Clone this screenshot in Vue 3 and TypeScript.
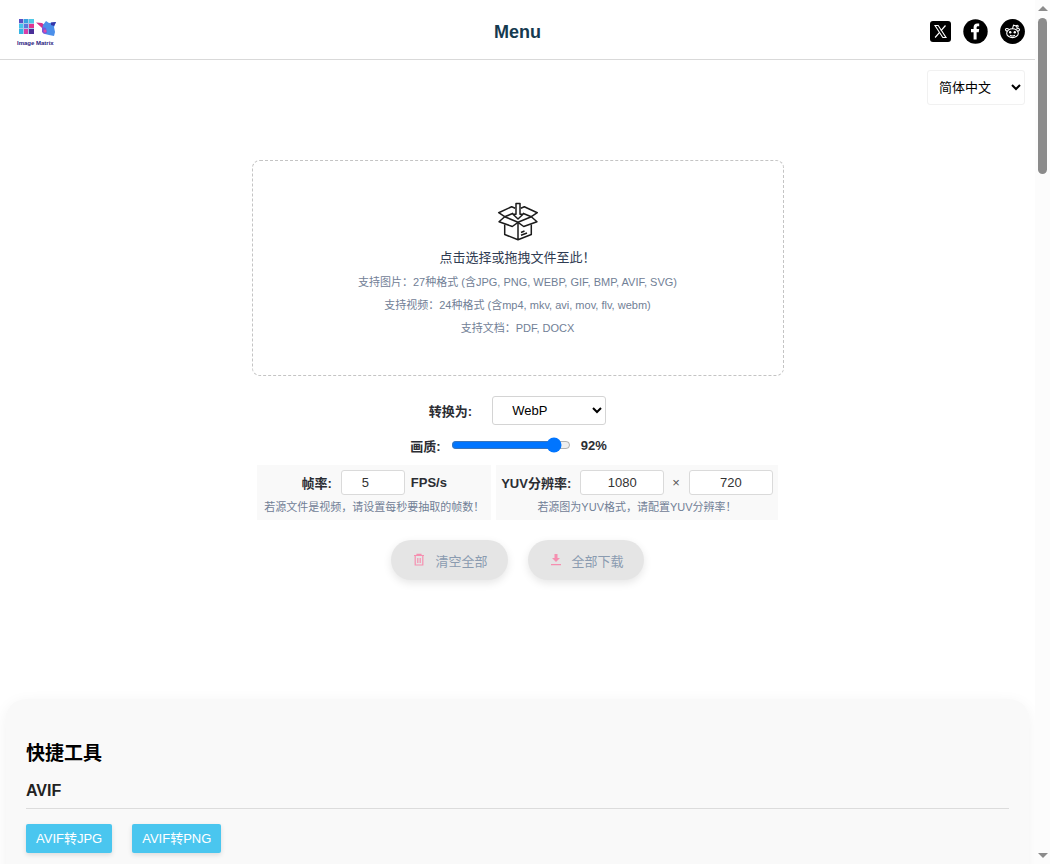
<script setup lang="ts">
import { ref } from 'vue'

const language = ref('zh')
const format = ref('webp')
const quality = ref(92)
const fps = ref(5)
const yuvWidth = ref('1080')
const yuvHeight = ref('720')

const hints: string[] = [
  '支持图片：27种格式 (含JPG, PNG, WEBP, GIF, BMP, AVIF, SVG)',
  '支持视频：24种格式 (含mp4, mkv, avi, mov, flv, webm)',
  '支持文档：PDF, DOCX',
]
const tools: string[] = ['AVIF转JPG', 'AVIF转PNG']
</script>

<template>
  <div class="shell">
    <div class="page">
      <header class="header">
        <a class="logo" href="#" aria-label="Image Matrix">
          <svg width="40" height="20" viewBox="0 0 40 20" aria-hidden="true">
            <rect x="2" y="1" width="15" height="15" fill="#a9c8ee" />
            <rect x="2" y="1" width="4" height="4" fill="#5b4fc4" />
            <rect x="7" y="1" width="4" height="4" fill="#3aa3e0" />
            <rect x="12" y="1" width="5" height="4" fill="#4fc8e6" />
            <rect x="2" y="6" width="4" height="4" fill="#44c4ea" />
            <rect x="7" y="6" width="4" height="4" fill="#5a78dc" />
            <rect x="12" y="6" width="5" height="4" fill="#e0358f" />
            <rect x="2" y="11" width="4" height="5" fill="#35b5e4" />
            <rect x="7" y="11" width="4" height="5" fill="#d83fa6" />
            <rect x="12" y="11" width="5" height="5" fill="#4a2f98" />
            <path d="M19 4.500l6 .5 4 3-2 4-3-3z" fill="#d6318c" />
            <path d="M26 7l3-4 3 2 7-1-2 5 1 5-1 4-5-1-4-1-3-4z" fill="#4b8fea" />
            <path d="M25 9l4 1 1 5-3 1-2-2z" fill="#7a55d8" />
            <path d="M34 4.500l5-.5-2 4-3-1z" fill="#3534a8" />
            <circle cx="28" cy="13" r="1.5" fill="#e04aa5" />
          </svg>
          <span class="logo-text">Image Matrix</span>
        </a>
        <a class="menu" href="#">Menu</a>
        <nav class="social">
          <a href="#" aria-label="X">
            <svg width="21" height="21" viewBox="0 0 21 21">
              <rect width="21" height="21" rx="3" fill="#000" />
              <path d="M5 4.5h3.200l7.800 12h-3.200z" fill="none" stroke="#fff" stroke-width="1.1" />
              <path d="M15.5 4.5l-4.5 5.2M9.6 11.4l-4.5 5.1" stroke="#fff" stroke-width="1.2" />
            </svg>
          </a>
          <a href="#" aria-label="Facebook">
            <svg width="25" height="25" viewBox="0 0 25 25">
              <circle cx="12.5" cy="12.5" r="12.2" fill="#000" />
              <path d="M10.6 20.5v-7.3H8V10h2.6V8.2c0-2.4 1.4-3.8 3.7-3.8 1 0 1.9.2 1.9.2v2.6h-1.2c-1.1 0-1.4.7-1.4 1.4V10h2.6l-.5 3.2h-2.1v7.3z" fill="#fff" />
            </svg>
          </a>
          <a href="#" aria-label="Reddit">
            <svg width="25" height="25" viewBox="0 0 25 25">
              <circle cx="12.5" cy="12.5" r="12.4" fill="#000" />
              <g fill="none" stroke="#fff" stroke-width="1.1">
                <ellipse cx="12.5" cy="14.2" rx="5.8" ry="4.4" />
                <path d="M12.5 9.800l1-3.700 3 .9M7.400 12.100c-2.200-.2-2.600-2.300-.7-2.600.9-.1 1.600.3 2 .9M17.600 12.100c2.200-.2 2.600-2.300.7-2.600-.9-.1-1.600.3-2 .9M10 16.200c1.500 1 3.500 1 5 0" />
                <circle cx="17.2" cy="7.3" r="1" />
              </g>
              <circle cx="10.2" cy="13.3" r="1.2" fill="#fff" />
              <circle cx="14.8" cy="13.3" r="1.2" fill="#fff" />
            </svg>
          </a>
        </nav>
      </header>

      <main class="main">
        <select v-model="language" class="language" aria-label="语言">
          <option value="zh">简体中文</option>
          <option value="en">English</option>
        </select>

        <button type="button" class="dropzone">
          <svg width="42" height="40" viewBox="0 0 42 40" fill="none" stroke="#1c1c1c" stroke-width="1.5" stroke-linejoin="round" aria-hidden="true">
            <path d="M7.700 23.500v10L21 38.800l13.300-5.300v-10M21 21.300v17.500" />
            <path d="M7.700 15.700L21 21.300l-5.700 4.200L2 20.700zM34.300 15.700L21 21.300l5.700 4.200L40 20.700z" />
            <path d="M7.700 15.700l-6-4 13-6 3.500 1.500M34.300 15.700l6-4-13-6-3.500 1.500M7.700 15.700l8.500-3.400M34.300 15.700l-8.500-3.400" />
            <path d="M19 2.500h4v10.800h3L21 18l-5-4.700h3z" />
            <path d="M24 31.500l3.500-1.500M24 34.300l6-2.300" />
          </svg>
          <span class="drop-title">点击选择或拖拽文件至此！</span>
          <span v-for="hint in hints" :key="hint" class="drop-hint">{{ hint }}</span>
        </button>

        <div class="row format-row">
          <label for="format">转换为:</label>
          <select id="format" v-model="format" class="format">
            <option value="webp">WebP</option>
            <option value="jpg">JPG</option>
            <option value="png">PNG</option>
          </select>
        </div>

        <div class="row quality-row">
          <label for="quality">画质:</label>
          <input id="quality" v-model="quality" type="range" min="1" max="100" />
          <output for="quality">{{ quality }}%</output>
        </div>

        <div class="options">
          <section class="option frame">
            <div class="fields">
              <label for="fps">帧率:</label>
              <input id="fps" v-model="fps" class="field short" type="number" min="1" />
              <span class="unit">FPS/s</span>
            </div>
            <p>若源文件是视频，请设置每秒要抽取的帧数！</p>
          </section>
          <section class="option">
            <div class="fields">
              <label for="yuv-width">YUV分辨率:</label>
              <input id="yuv-width" v-model="yuvWidth" class="field" type="text" />
              <span class="times">×</span>
              <input v-model="yuvHeight" class="field" type="text" aria-label="YUV高度" />
            </div>
            <p>若源图为YUV格式，请配置YUV分辨率！</p>
          </section>
        </div>

        <div class="actions">
          <button type="button" class="action" disabled>
            <svg width="12" height="14" viewBox="0 0 12 14" fill="none" stroke="#f58fb0" stroke-width="1.2" aria-hidden="true">
              <path d="M1 2.500h10M4 2.500V1.300h4v1.200M2.200 2.500v9.500h7.600V2.500M4.800 5v5M7.200 5v5" />
            </svg>
            清空全部
          </button>
          <button type="button" class="action" disabled>
            <svg width="12" height="14" viewBox="0 0 12 14" fill="#f58fb0" aria-hidden="true">
              <path d="M4.500 1h3v4H10L6 9 2 5h2.500zM1 11h10v1.200H1z" />
            </svg>
            全部下载
          </button>
        </div>

        <section class="panel">
          <h2>快捷工具</h2>
          <h3>AVIF</h3>
          <div class="tools">
            <a v-for="tool in tools" :key="tool" href="#" class="tool">{{ tool }}</a>
          </div>
        </section>
      </main>
    </div>

    <div class="scrollbar" aria-hidden="true">
      <span class="arrow up"></span>
      <span class="thumb"></span>
      <span class="arrow down"></span>
    </div>
  </div>
</template>

<style>
body {
  margin: 0;
  background: #fff;
}
</style>

<style scoped>
.shell,
.shell * {
  box-sizing: border-box;
}
.shell {
  display: flex;
  height: 100vh;
  overflow: hidden;
  font-family: 'Liberation Sans', 'Noto Sans CJK SC', sans-serif;
  font-size: 13px;
  color: #2b2d33;
}
.shell button,
.shell input,
.shell select {
  font-family: inherit;
  font-size: 13px;
}
.page {
  flex: 1;
  min-width: 0;
  overflow: hidden;
}
.header {
  display: grid;
  grid-template-columns: 1fr auto 1fr;
  align-items: center;
  height: 60px;
  padding: 0 10px;
  border-bottom: 1px solid #d9d9d9;
}
.logo {
  display: flex;
  flex-direction: column;
  width: 42px;
  margin-left: 7px;
  padding-top: 6px;
  color: #2a1a80;
  text-decoration: none;
}
.logo-text {
  font-size: 6px;
  font-weight: bold;
  line-height: 10px;
  white-space: nowrap;
}
.menu {
  padding-top: 4px;
  font-size: 18px;
  font-weight: bold;
  line-height: 24px;
  color: #153a50;
  text-decoration: none;
}
.social {
  display: flex;
  justify-content: flex-end;
  align-items: center;
  gap: 12px;
  padding-top: 3px;
}
.social a,
.social svg {
  display: block;
}
.main {
  display: flex;
  flex-direction: column;
  align-items: center;
}
.language {
  align-self: flex-end;
  width: 98px;
  height: 35px;
  margin: 10px 10px 0 0;
  padding: 0 0 0 7px;
  border: 1px solid #f1f1f1;
  border-radius: 3px;
  background: #fff;
  color: #000;
}
.dropzone {
  display: flex;
  flex-direction: column;
  align-items: center;
  width: 532px;
  max-width: 100%;
  margin-top: 55px;
  padding: 40px 20px 35px;
  border: 1px dashed #c4c4c4;
  border-radius: 8px;
  background: #fff;
}
.drop-title {
  margin-top: 4px;
  line-height: 26px;
  color: #2f3b52;
}
.drop-hint {
  font-size: 11px;
  line-height: 23px;
  color: #718096;
}
.row {
  display: flex;
  align-items: center;
}
label,
output,
.unit {
  font-weight: bold;
}
.format-row {
  gap: 20px;
  margin-top: 20px;
}
.format {
  width: 114px;
  height: 29px;
  padding: 0 0 0 15px;
  border: 1px solid #d4d4d4;
  border-radius: 3px;
  background: #fff;
  color: #000;
}
.quality-row {
  gap: 10px;
  height: 20px;
  margin: 10px 0;
}
.quality-row input {
  width: 120px;
  height: 16px;
  margin: 0;
}
.quality-row output {
  width: 44px;
}
.options {
  display: flex;
  gap: 5px;
}
.option {
  padding: 5px;
  background: #f9f9f9;
}
.frame {
  padding: 5px 7px;
}
.option p {
  margin: 4px 0 0;
  font-size: 11px;
  line-height: 16px;
  text-align: center;
  color: #718096;
}
.fields {
  display: flex;
  align-items: center;
  justify-content: center;
}
.field {
  width: 84px;
  height: 25px;
  margin-left: 9px;
  padding: 0 4px;
  border: 1px solid #dadada;
  border-radius: 3px;
  background: #fff;
  text-align: center;
  color: #333;
}
.short {
  width: 64px;
}
.short::-webkit-inner-spin-button {
  opacity: 0;
}
.unit {
  margin-left: 6px;
}
.times {
  margin-left: 8px;
  color: #555;
}
.actions {
  display: flex;
  gap: 20px;
  margin-top: 20px;
}
.action {
  display: flex;
  align-items: center;
  gap: 10px;
  height: 40px;
  padding: 0 20px 0 22px;
  border: 0;
  border-radius: 20px;
  background: #e5e5e5;
  color: #8a9bb0;
  box-shadow: 0 3px 8px rgba(0, 0, 0, 0.1);
}
.panel {
  align-self: stretch;
  min-height: 300px;
  margin: 119px 6px 0;
  padding: 40px 20px;
  border-radius: 20px;
  background: #f9f9f9;
  box-shadow: 0 4px 16px rgba(0, 0, 0, 0.06);
}
.panel h2 {
  margin: 0;
  font-size: 19px;
  line-height: 30px;
  color: #000;
}
.panel h3 {
  margin: 11px 0 15px;
  padding-bottom: 6px;
  border-bottom: 1px solid #dcdcdc;
  font-size: 16px;
  line-height: 22px;
  color: #222;
}
.tools {
  display: flex;
  gap: 20px;
}
.tool {
  padding: 0 10px;
  border-radius: 2px;
  background: #4ac6ef;
  box-shadow: 0 2px 5px rgba(0, 0, 0, 0.12);
  line-height: 29px;
  color: #fff;
  text-decoration: none;
}
.scrollbar {
  display: flex;
  flex-direction: column;
  align-items: center;
  width: 15px;
  padding: 6px 0;
  background: #fcfcfc;
}
.arrow {
  border: 5px solid transparent;
}
.up {
  border-top: 0;
  border-bottom-color: #8b8b8b;
}
.down {
  margin-top: auto;
  border-bottom: 0;
  border-top-color: #8b8b8b;
}
.thumb {
  width: 9px;
  height: 18vh;
  margin-top: 7px;
  border-radius: 5px;
  background: #8b8b8b;
}
</style>
